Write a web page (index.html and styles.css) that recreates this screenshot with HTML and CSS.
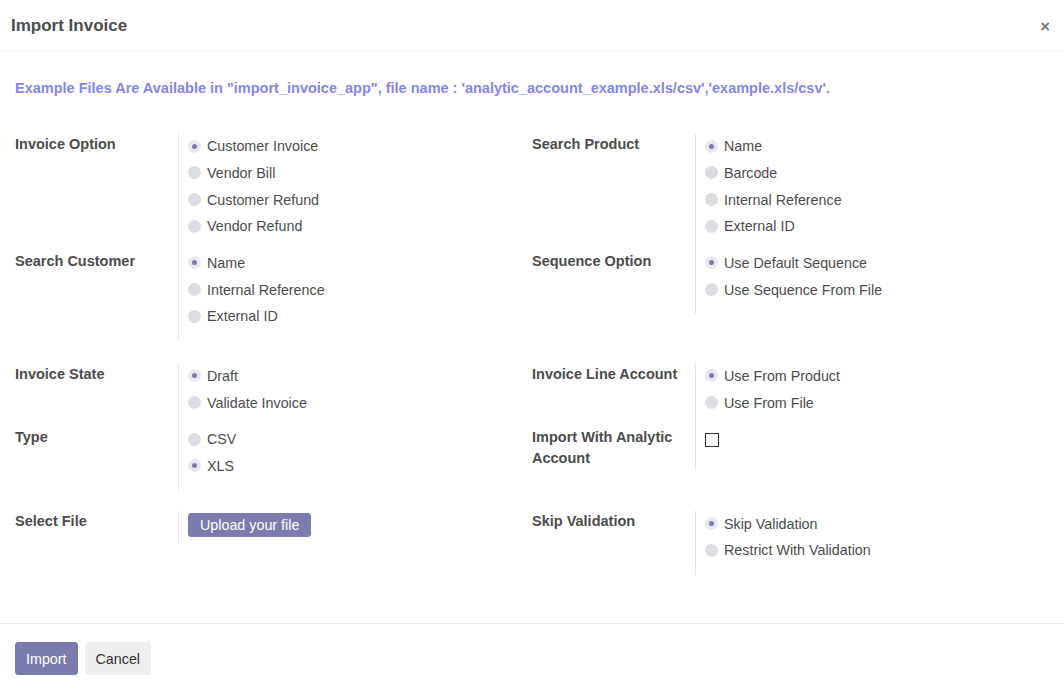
FILE: index.html
```html
<!DOCTYPE html>
<html>
<head>
<meta charset="utf-8">
<title>Import Invoice</title>
<link rel="stylesheet" href="styles.css">
</head>
<body>
<div class="modal">
  <header class="modal-header">
    <h4 class="modal-title">Import Invoice</h4>
    <button class="close" type="button">×</button>
  </header>
  <main class="modal-body">
    <p class="note">Example Files Are Available in "import_invoice_app", file name : 'analytic_account_example.xls/csv','example.xls/csv'.</p>

    <div class="group">
      <div class="half">
        <div class="field">
          <div class="label">Invoice Option</div>
          <div class="value radios">
            <div class="radio checked"><span class="dot"></span>Customer Invoice</div>
            <div class="radio"><span class="dot"></span>Vendor Bill</div>
            <div class="radio"><span class="dot"></span>Customer Refund</div>
            <div class="radio"><span class="dot"></span>Vendor Refund</div>
          </div>
        </div>
        <div class="field">
          <div class="label">Search Customer</div>
          <div class="value radios">
            <div class="radio checked"><span class="dot"></span>Name</div>
            <div class="radio"><span class="dot"></span>Internal Reference</div>
            <div class="radio"><span class="dot"></span>External ID</div>
          </div>
        </div>
      </div>
      <div class="half">
        <div class="field">
          <div class="label">Search Product</div>
          <div class="value radios">
            <div class="radio checked"><span class="dot"></span>Name</div>
            <div class="radio"><span class="dot"></span>Barcode</div>
            <div class="radio"><span class="dot"></span>Internal Reference</div>
            <div class="radio"><span class="dot"></span>External ID</div>
          </div>
        </div>
        <div class="field">
          <div class="label">Sequence Option</div>
          <div class="value radios">
            <div class="radio checked"><span class="dot"></span>Use Default Sequence</div>
            <div class="radio"><span class="dot"></span>Use Sequence From File</div>
          </div>
        </div>
      </div>
    </div>

    <div class="group">
      <div class="half">
        <div class="field">
          <div class="label">Invoice State</div>
          <div class="value radios">
            <div class="radio checked"><span class="dot"></span>Draft</div>
            <div class="radio"><span class="dot"></span>Validate Invoice</div>
          </div>
        </div>
        <div class="field">
          <div class="label">Type</div>
          <div class="value radios">
            <div class="radio"><span class="dot"></span>CSV</div>
            <div class="radio checked"><span class="dot"></span>XLS</div>
          </div>
        </div>
      </div>
      <div class="half">
        <div class="field">
          <div class="label">Invoice Line Account</div>
          <div class="value radios">
            <div class="radio checked"><span class="dot"></span>Use From Product</div>
            <div class="radio"><span class="dot"></span>Use From File</div>
          </div>
        </div>
        <div class="field">
          <div class="label">Import With Analytic Account</div>
          <div class="value">
            <span class="checkbox"></span>
          </div>
        </div>
      </div>
    </div>

    <div class="group group-last">
      <div class="half">
        <div class="field">
          <div class="label">Select File</div>
          <div class="value">
            <button class="btn btn-primary btn-upload" type="button">Upload your file</button>
          </div>
        </div>
      </div>
      <div class="half">
        <div class="field">
          <div class="label">Skip Validation</div>
          <div class="value radios">
            <div class="radio checked"><span class="dot"></span>Skip Validation</div>
            <div class="radio"><span class="dot"></span>Restrict With Validation</div>
          </div>
        </div>
      </div>
    </div>
  </main>
  <footer class="modal-footer">
    <button class="btn btn-primary" type="button">Import</button>
    <button class="btn btn-secondary" type="button">Cancel</button>
  </footer>
</div>
</body>
</html>
```

FILE: styles.css
```css
* { box-sizing: border-box; }

html, body {
  margin: 0;
  padding: 0;
  height: 100%;
  background: #ffffff;
}

body {
  font-family: "Liberation Sans", Arial, sans-serif;
  font-size: 14.3px;
  color: #4c4c4c;
}

.modal {
  display: flex;
  flex-direction: column;
  height: 100vh;
}

.modal-header {
  display: flex;
  align-items: center;
  justify-content: space-between;
  height: 52px;
  padding: 0 13px 0 11px;
  border-bottom: 1px solid #f0f0f0;
}

.modal-title {
  margin: 0;
  font-size: 17px;
  font-weight: 700;
  color: #4c4c4c;
}

.close {
  border: none;
  background: none;
  padding: 0;
  font-family: "DejaVu Sans", sans-serif;
  font-size: 14px;
  font-weight: 700;
  line-height: 1;
  color: #777777;
}

.modal-body {
  flex: 1;
  padding: 26px 15px 0;
}

.note {
  margin: 0 0 36px;
  line-height: 20px;
  font-size: 14.5px;
  font-weight: 700;
  color: #8585f2;
}

.group {
  display: grid;
  grid-template-columns: 1fr 1fr;
  align-items: start;
  margin-bottom: 23px;
}

.group + .group-last {
  margin-top: -2px;
}

.field {
  display: grid;
  grid-template-columns: 164px 1fr;
}

.label {
  font-size: 14.5px;
  font-weight: 700;
  line-height: 21.5px;
  border-right: 1px solid #e2e2e2;
  padding-right: 10px;
}

.value {
  padding-left: 9px;
}

.radios {
  padding-bottom: 11px;
  margin-top: -1px;
}

.radio {
  display: flex;
  align-items: center;
  height: 26.67px;
}

.dot {
  width: 13px;
  height: 13px;
  border-radius: 50%;
  background: #dcdde3;
  margin-right: 6px;
  display: flex;
  align-items: center;
  justify-content: center;
  flex: none;
}

.radio.checked .dot {
  background: #e8e8f0;
}

.radio.checked .dot::after {
  content: "";
  width: 5px;
  height: 5px;
  border-radius: 50%;
  background: #7c7bad;
}

.checkbox {
  display: block;
  width: 14px;
  height: 14px;
  margin-top: 6px;
  border: 1px solid #333333;
  background: #ffffff;
}

.btn {
  font-family: "Liberation Sans", Arial, sans-serif;
  font-size: 14.3px;
  border: 1px solid transparent;
  border-radius: 3px;
  cursor: pointer;
}

.btn-primary {
  background: #7c7bad;
  border-color: #7c7bad;
  color: #ffffff;
}

.btn-secondary {
  background: #f0eeee;
  border-color: #f0eeee;
  color: #333333;
}

.btn-upload {
  height: 24px;
  margin-top: 2px;
  margin-bottom: 6px;
  padding: 0 11px;
  line-height: 22px;
}

.modal-footer {
  display: flex;
  gap: 7px;
  align-items: flex-start;
  height: 75px;
  padding: 18px 15px 0;
  border-top: 1px solid #ececec;
}

.modal-footer .btn {
  height: 33px;
  padding: 0 10px;
}
```
